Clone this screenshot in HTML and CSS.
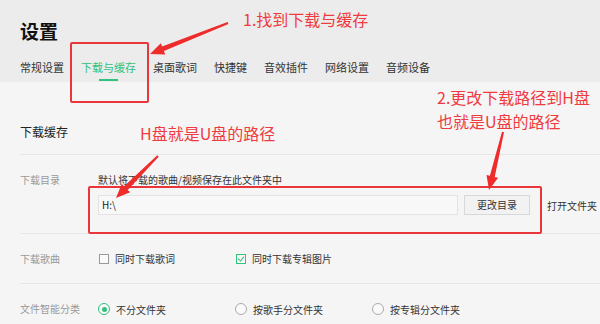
FILE: index.html
```html
<!DOCTYPE html>
<html>
<head>
<meta charset="utf-8">
<link rel="stylesheet" href="styles.css">
</head>
<body>
<div class="page">
  <div class="header">
    <div class="title">设置</div>
    <div class="tabs">
      <span class="tab">常规设置</span>
      <span class="tab active">下载与缓存</span>
      <span class="tab">桌面歌词</span>
      <span class="tab">快捷键</span>
      <span class="tab">音效插件</span>
      <span class="tab">网络设置</span>
      <span class="tab">音频设备</span>
    </div>
  </div>
  <div class="content">
    <div class="section-title">下载缓存</div>
    <div class="row row-dir">
      <div class="label">下载目录</div>
      <div class="body">
        <div class="desc">默认将下载的歌曲/视频保存在此文件夹中</div>
        <div class="path-line">
          <div class="input">H:\</div>
          <div class="btn">更改目录</div>
          <div class="link">打开文件夹</div>
        </div>
      </div>
    </div>
    <div class="row row-song">
      <div class="label">下载歌曲</div>
      <div class="opts">
        <span class="opt"><span class="check"></span>同时下载歌词</span>
        <span class="opt"><span class="check on"></span>同时下载专辑图片</span>
      </div>
    </div>
    <div class="row row-cat">
      <div class="label">文件智能分类</div>
      <div class="opts">
        <span class="opt"><span class="radio on"></span>不分文件夹</span>
        <span class="opt"><span class="radio"></span>按歌手分文件夹</span>
        <span class="opt"><span class="radio"></span>按专辑分文件夹</span>
      </div>
    </div>
  </div>

  <div class="box box-tab"></div>
  <div class="box box-path"></div>
  <div class="note note1">1.找到下载与缓存</div>
  <div class="note note2a">2.更改下载路径到H盘</div>
  <div class="note note2b">也就是U盘的路径</div>
  <div class="note note3">H盘就是U盘的路径</div>
  <svg class="arrows" width="600" height="324" viewBox="0 0 600 324">
    <polygon points="228.4,23.9 163.9,51.1 165.2,54.4 150,54 160.8,43.2 162.1,46.5 227.6,22.1"/>
    <polygon points="158.7,156.7 127.7,189.9 130.1,192.3 116,198 121.7,183.9 124.1,186.3 157.3,155.3"/>
    <polygon points="504,132.2 494.7,177 498.1,177.8 489,190 486.5,175 489.9,175.8 502,131.8"/>
  </svg>
</div>
</body>
</html>
```
FILE: styles.css
```css
* { box-sizing: border-box; }
html, body { margin: 0; padding: 0; }
body {
  background: #f5f5f5;
  font-family: "Noto Sans CJK SC", "Noto Sans", sans-serif;
  color: #333;
}
.page { position: relative; width: 600px; height: 324px; overflow: hidden; }
.header {
  background: #ececec;
  height: 82px;
  padding: 19px 0 0 20px;
}
.title {
  font-size: 19px;
  font-weight: bold;
  line-height: 24px;
  color: #111;
}
.tabs {
  display: flex;
  gap: 17px;
  margin-top: 16px;
  font-size: 11px;
  line-height: 16px;
  color: #333;
}
.tab { position: relative; }
.tab.active { color: #31c27c; }
.tab.active::after {
  content: "";
  position: absolute;
  left: 18px;
  top: 20px;
  width: 19px;
  height: 2px;
  background: #31c27c;
}
.content { padding-left: 20px; }
.section-title {
  font-size: 12px;
  line-height: 16px;
  padding-top: 42px;
  padding-bottom: 14px;
  color: #222;
  border-bottom: 1px solid #e6e6e6;
}
.row {
  display: flex;
  border-bottom: 1px solid #e6e6e6;
  font-size: 10px;
}
.label { width: 78px; color: #999; line-height: 14px; }
.row-dir { padding-top: 18px; height: 79px; }
.body { flex: 1; }
.desc { color: #333; line-height: 14px; }
.path-line {
  display: flex;
  align-items: center;
  margin-top: 8px;
}
.input {
  width: 360px;
  height: 20px;
  background: #f8f8f8;
  border: 1px solid #e3e3e3;
  padding-left: 3px;
  line-height: 18px;
  color: #222;
}
.btn {
  width: 66px;
  height: 20px;
  margin-left: 6px;
  border: 1px solid #d8d8d8;
  background: #f2f2f2;
  text-align: center;
  line-height: 18px;
  color: #333;
}
.link { margin-left: 17px; color: #333; white-space: nowrap; }
.row-song { height: 50px; align-items: center; }
.row-cat { height: 50px; align-items: center; border-bottom: none; }
.opts { display: flex; color: #333; }
.opt { display: flex; align-items: center; width: 137px; }
.check {
  width: 10px;
  height: 10px;
  border: 1px solid #999;
  margin: 0 6px 0 1px;
  background: #fafafa;
}
.check.on {
  border-color: #31c27c;
  position: relative;
}
.check.on::after {
  content: "";
  position: absolute;
  left: 2px;
  top: 0px;
  width: 3px;
  height: 5px;
  border: solid #31c27c;
  border-width: 0 1px 1px 0;
  transform: rotate(40deg);
}
.radio {
  width: 12px;
  height: 12px;
  border: 1px solid #aaa;
  border-radius: 50%;
  margin-right: 6px;
  background: #fafafa;
  position: relative;
}
.radio.on { border-color: #31c27c; }
.radio.on::after {
  content: "";
  position: absolute;
  left: 2.5px;
  top: 2.5px;
  width: 5px;
  height: 5px;
  border-radius: 50%;
  background: #31c27c;
}
.box {
  position: absolute;
  border: 2px solid #e8363b;
  border-radius: 2px;
}
.box-tab { left: 70px; top: 42px; width: 79px; height: 61px; }
.box-path { left: 88px; top: 186px; width: 454px; height: 48px; }
.note {
  position: absolute;
  color: #ef3b40;
  font-size: 16px;
  line-height: 20px;
  white-space: nowrap;
}
.note1 { left: 243px; top: 9px; }
.note2a { left: 437px; top: 87px; }
.note2b { left: 437px; top: 111px; }
.note3 { left: 140px; top: 123px; }
.arrows { position: absolute; left: 0; top: 0; }
.arrows polygon { fill: #ee2c2c; }
```
